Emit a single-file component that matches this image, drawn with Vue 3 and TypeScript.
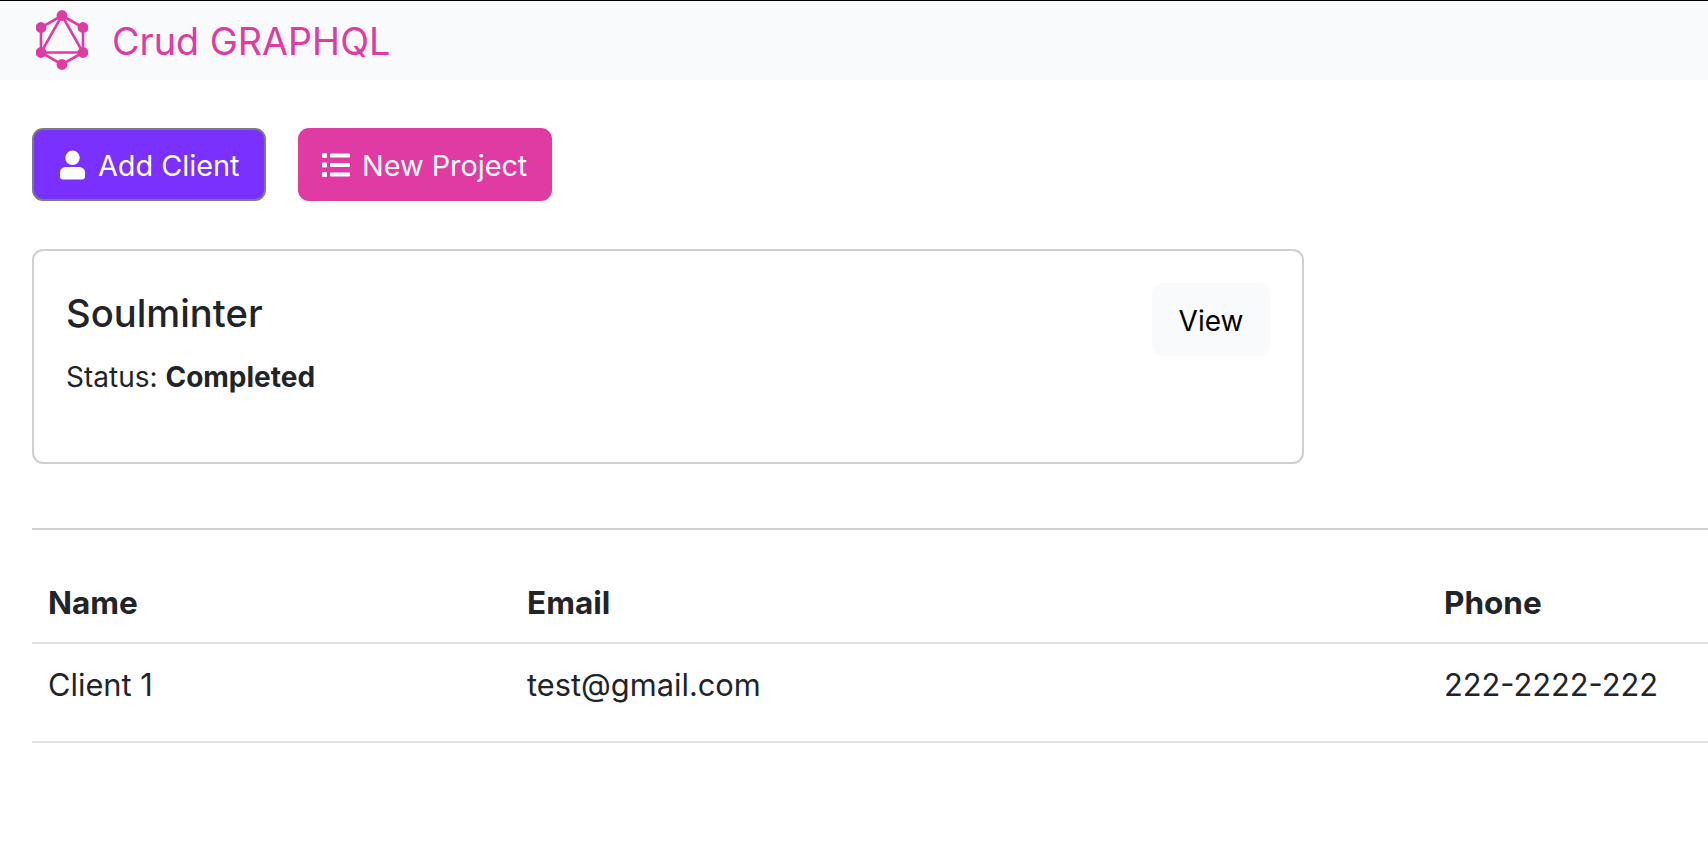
<script setup lang="ts">
interface Client {
  name: string
  email: string
  phone: string
}

const clients: Client[] = [
  { name: 'Client 1', email: 'test@gmail.com', phone: '222-2222-222' }
]
</script>

<template>
  <div class="page">
    <nav class="navbar">
      <svg class="logo" viewBox="0 0 52 60" fill="none" stroke="#e03ba3" stroke-width="2.6">
        <path d="M26 5.5 L47 17.5 V42.5 L26 54.5 L5 42.5 V17.5 Z" />
        <path d="M26 5.5 L47 42.5 H5 Z" />
        <g fill="#e03ba3" stroke="none">
          <circle cx="26" cy="5.5" r="5.4" />
          <circle cx="47" cy="17.5" r="5.4" />
          <circle cx="47" cy="42.5" r="5.4" />
          <circle cx="26" cy="54.5" r="5.4" />
          <circle cx="5" cy="42.5" r="5.4" />
          <circle cx="5" cy="17.5" r="5.4" />
        </g>
      </svg>
      <span class="brand">Crud GRAPHQL</span>
    </nav>

    <main class="content">
      <div class="actions">
        <button class="btn btn-client">
          <svg class="icon-user" viewBox="0 0 26 30" fill="#fff">
            <circle cx="13" cy="7.5" r="7.5" />
            <path d="M6 17 H20 A6 6 0 0 1 26 23 V27 A3 3 0 0 1 23 30 H3 A3 3 0 0 1 0 27 V23 A6 6 0 0 1 6 17 Z" />
          </svg>
          Add Client
        </button>
        <button class="btn btn-project">
          <svg class="icon-list" viewBox="0 0 28 24" fill="#fff">
            <rect x="0" y="0" width="5" height="5" rx="1" />
            <rect x="0" y="9.5" width="5" height="5" rx="1" />
            <rect x="0" y="19" width="5" height="5" rx="1" />
            <rect x="8" y="0.5" width="20" height="4" rx="1" />
            <rect x="8" y="10" width="20" height="4" rx="1" />
            <rect x="8" y="19.5" width="20" height="4" rx="1" />
          </svg>
          New Project
        </button>
      </div>

      <section class="card">
        <div class="card-text">
          <h5>Soulminter</h5>
          <p>Status: <strong>Completed</strong></p>
        </div>
        <a class="view-btn">View</a>
      </section>

      <hr class="divider" />

      <table class="clients">
        <thead>
          <tr>
            <th class="col-name">Name</th>
            <th class="col-email">Email</th>
            <th class="col-phone">Phone</th>
          </tr>
        </thead>
        <tbody>
          <tr v-for="c in clients" :key="c.email">
            <td>{{ c.name }}</td>
            <td>{{ c.email }}</td>
            <td>{{ c.phone }}</td>
          </tr>
        </tbody>
      </table>
    </main>
  </div>
</template>

<style>
html, body {
  margin: 0;
  background: #fff;
  overflow: hidden;
}
</style>

<style scoped>
.page {
  height: 846px;
  overflow: hidden;
  border-top: 1px solid #000;
  box-sizing: border-box;
  font-family: Inter, "Liberation Sans", sans-serif;
  color: #212529;
}

.navbar {
  display: flex;
  align-items: center;
  height: 79px;
  padding-left: 36px;
  background: #f9fafc;
}

.logo {
  width: 52px;
  height: 60px;
  margin: -2px 24px 0 0;
}

.brand {
  font-size: 37.7px;
  color: #e03ba3;
}

.content {
  padding: 48px 0 0 32px;
}

.actions {
  display: flex;
  gap: 32px;
}

.btn {
  display: flex;
  align-items: center;
  box-sizing: border-box;
  height: 73px;
  border-radius: 11px;
  font-family: inherit;
  font-size: 28.8px;
  color: #fff;
  padding-top: 2px;
}

.btn-client {
  width: 234px;
  padding-left: 26px;
  background: #7a30ff;
  border: 2px solid #7b7b86;
}

.btn-project {
  width: 254px;
  padding-left: 24px;
  background: #e03ba3;
  border: none;
}

.icon-user {
  width: 25px;
  height: 30px;
  margin-right: 13px;
}

.icon-list {
  width: 28px;
  height: 24px;
  margin-right: 12px;
}

.card {
  display: flex;
  justify-content: space-between;
  align-items: flex-start;
  box-sizing: border-box;
  width: 1272px;
  height: 215px;
  margin-top: 48px;
  padding: 32px 32px 0;
  border: 2px solid #cfcfcf;
  border-radius: 11px;
}

h5 {
  margin: 7px 0 0;
  font-size: 38.2px;
  font-weight: 500;
  line-height: 46px;
}

p {
  margin: 21px 0 0;
  font-size: 28px;
  line-height: 40px;
}

strong {
  font-weight: 700;
}

.view-btn {
  display: flex;
  align-items: center;
  justify-content: center;
  width: 118px;
  height: 73px;
  padding-top: 2px;
  box-sizing: border-box;
  border-radius: 11px;
  background: #f9fafc;
  color: #000;
  font-size: 28px;
}

.divider {
  margin: 64px 0 0;
  height: 2px;
  border: none;
  background: #cfcfcf;
}

.clients {
  margin-top: 32px;
  width: 1800px;
  table-layout: fixed;
  border-collapse: collapse;
  font-size: 30.8px;
}

.col-name {
  width: 479px;
}

.col-email {
  width: 917px;
}

th, td {
  box-sizing: border-box;
  padding: 0 16px;
  text-align: left;
  border-bottom: 2px solid #dee2e6;
}

th {
  height: 81px;
  font-size: 31.5px;
  font-weight: 700;
}

td {
  height: 99px;
  padding-top: 22px;
  vertical-align: top;
  line-height: 37px;
}
</style>
